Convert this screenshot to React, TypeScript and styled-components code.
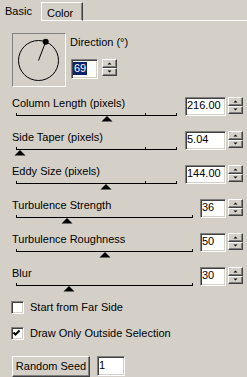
import styled, { createGlobalStyle, css } from 'styled-components';

const GlobalStyle = createGlobalStyle`
  html, body {
    margin: 0;
    padding: 0;
    background: #d4d0c8;
  }
`;

const Window = styled.div`
  width: 247px;
  height: 377px;
  overflow: hidden;
  background: #d4d0c8;
  font-family: "Liberation Sans", Arial, sans-serif;
  font-size: 11px;
  line-height: 13px;
  color: #000;
  display: flex;
  flex-direction: column;
`;

const TabStrip = styled.div`
  display: flex;
  align-items: flex-end;
  height: 21px;
  flex: none;
`;

const Tab = styled.div<{ $active?: boolean }>`
  box-sizing: border-box;
  white-space: nowrap;
  ${({ $active }) =>
    $active
      ? css`
          width: 41px;
          height: 21px;
          padding: 5px 0 0 5px;
        `
      : css`
          height: 19px;
          padding: 4px 9px 0 5px;
          border-top: 1px solid #fff;
          border-left: 1px solid #fff;
          border-right: 1px solid #404040;
          border-bottom: 1px solid #fff;
          box-shadow: inset -1px 0 #808080;
        `}
`;

const TabLine = styled.div`
  flex: 1;
  height: 1px;
  background: #fff;
`;

const Body = styled.div`
  display: flex;
  flex-direction: column;
  padding: 12px 4px 0 12px;
`;

const TopSection = styled.div`
  display: flex;
  height: 54px;
  flex: none;
  margin-bottom: 10px;
`;

const Dial = styled.div`
  box-sizing: border-box;
  width: 54px;
  height: 54px;
  border: 1px solid;
  border-color: #808080 #fff #fff #808080;
`;

const DirectionCol = styled.div`
  display: flex;
  flex-direction: column;
  margin-left: 4px;
  padding-top: 3px;
`;

const SpinRow = styled.div<{ $top?: number; $left?: number }>`
  display: flex;
  align-items: flex-start;
  gap: ${({ $left }) => ($left ? 4 : 2)}px;
  margin-top: ${({ $top }) => $top ?? 0}px;
  margin-left: ${({ $left }) => $left ?? 0}px;
`;

const Field = styled.div<{ $w: number; $h?: number; $pt?: number }>`
  box-sizing: border-box;
  width: ${({ $w }) => $w}px;
  height: ${({ $h }) => $h ?? 19}px;
  flex: none;
  background: #fff;
  border: 1px solid;
  border-color: #808080 #fff #fff #808080;
  box-shadow: inset 1px 1px #404040, inset -1px -1px #d4d0c8;
  padding: ${({ $pt }) => $pt ?? 1}px 0 0 1px;
  white-space: nowrap;
  overflow: hidden;
`;

const Selected = styled.span`
  display: inline-block;
  background: #0a246a;
  color: #fff;
  padding: 0 1px;
`;

const Spin = styled.div`
  display: flex;
  flex-direction: column;
  width: 15px;
  height: 17px;
  flex: none;
`;

const SpinHalf = styled.div`
  flex: 1;
  box-sizing: border-box;
  border: 1px solid;
  border-color: #fff #404040 #404040 #fff;
  box-shadow: inset -1px -1px #808080;
  background: #d4d0c8;
  display: flex;
  align-items: center;
  justify-content: center;
`;

const SliderRow = styled.div`
  display: flex;
  height: 34px;
  flex: none;
`;

const SliderCol = styled.div`
  flex: 1;
  display: flex;
  flex-direction: column;
`;

const Label = styled.div`
  height: 13px;
  white-space: nowrap;
`;

const TrackSvg = styled.svg`
  display: block;
  margin: 3px 0 0 4px;
  overflow: visible;
`;

const CheckRow = styled.div<{ $top: number }>`
  display: flex;
  align-items: center;
  gap: 6px;
  height: 13px;
  margin: ${({ $top }) => $top}px 0 0 -1px;
  white-space: nowrap;
`;

const CheckBox = styled.div`
  box-sizing: border-box;
  width: 13px;
  height: 13px;
  flex: none;
  background: #fff;
  border: 1px solid;
  border-color: #808080 #fff #fff #808080;
  box-shadow: inset 1px 1px #404040, inset -1px -1px #d4d0c8;
`;

const ButtonRow = styled.div`
  display: flex;
  align-items: flex-start;
  gap: 7px;
  margin-top: 16px;
`;

const Button = styled.button`
  box-sizing: border-box;
  width: 78px;
  height: 21px;
  padding: 0;
  font: inherit;
  color: #000;
  background: #d4d0c8;
  border: 1px solid;
  border-color: #fff #404040 #404040 #fff;
  box-shadow: inset -1px -1px #808080;
`;

const Spinner = () => (
  <Spin>
    <SpinHalf>
      <svg width="5" height="3">
        <path d="M2.5 0.5 L4.5 2.5 L0.5 2.5 Z" fill="#000" />
      </svg>
    </SpinHalf>
    <SpinHalf>
      <svg width="5" height="3">
        <path d="M0.5 0.5 L4.5 0.5 L2.5 2.5 Z" fill="#000" />
      </svg>
    </SpinHalf>
  </Spin>
);

type Slider = {
  label: string;
  value: string;
  thumb: number;
  track: number;
  field: number;
  ticks: number[];
};

const sliders: Slider[] = [
  { label: 'Column Length (pixels)', value: '216.00', thumb: 91, track: 161, field: 41, ticks: [0, 129, 160] },
  { label: 'Side Taper (pixels)', value: '5.04', thumb: 4, track: 161, field: 41, ticks: [0, 129, 160] },
  { label: 'Eddy Size (pixels)', value: '144.00', thumb: 90, track: 161, field: 41, ticks: [0, 129, 160] },
  { label: 'Turbulence Strength', value: '36', thumb: 51, track: 177, field: 26, ticks: [0, 176] },
  { label: 'Turbulence Roughness', value: '50', thumb: 89, track: 177, field: 26, ticks: [0, 176] },
  { label: 'Blur', value: '30', thumb: 53, track: 177, field: 26, ticks: [0, 176] },
];

const Track = ({ s }: { s: Slider }) => (
  <TrackSvg width={s.track} height={10}>
    <line x1={0} y1={2.5} x2={s.track} y2={2.5} stroke="#000" />
    {s.ticks.map((t) => (
      <line key={t} x1={t + 0.5} y1={0} x2={t + 0.5} y2={3} stroke="#000" />
    ))}
    <polygon points={`${s.thumb - 5.5},8.5 ${s.thumb},3 ${s.thumb + 5.5},8.5`} fill="#000" />
  </TrackSvg>
);

// direction dial, 69 degrees from the x axis
const angle = (69 * Math.PI) / 180;
const cx = 25.5;
const cy = 26.5;
const dotX = cx + 20 * Math.cos(angle);
const dotY = cy - 20 * Math.sin(angle);

export default function App() {
  return (
    <Window>
      <GlobalStyle />
      <TabStrip>
        <Tab $active>Basic</Tab>
        <Tab>Color</Tab>
        <TabLine />
      </TabStrip>
      <Body>
        <TopSection>
          <Dial>
            <svg width="52" height="52">
              <circle cx={cx} cy={cy} r={20} fill="none" stroke="#000" />
              <line x1={cx} y1={cy} x2={dotX} y2={dotY} stroke="#000" />
              <circle cx={dotX} cy={dotY} r={3} fill="#000" />
            </svg>
          </Dial>
          <DirectionCol>
            <Label>Direction (°)</Label>
            <SpinRow $top={10} $left={1}>
              <Field $w={27} $h={20} $pt={2}>
                <Selected>69</Selected>
              </Field>
              <Spinner />
            </SpinRow>
          </DirectionCol>
        </TopSection>

        {sliders.map((s) => (
          <SliderRow key={s.label}>
            <SliderCol>
              <Label>{s.label}</Label>
              <Track s={s} />
            </SliderCol>
            <SpinRow>
              <Field $w={s.field}>{s.value}</Field>
              <Spinner />
            </SpinRow>
          </SliderRow>
        ))}

        <CheckRow $top={0}>
          <CheckBox />
          <span>Start from Far Side</span>
        </CheckRow>
        <CheckRow $top={13}>
          <CheckBox>
            <svg width="9" height="9">
              <path d="M1.5 3.5 L3.5 5.5 L7.5 1.5" fill="none" stroke="#000" strokeWidth="2" />
            </svg>
          </CheckBox>
          <span>Draw Only Outside Selection</span>
        </CheckRow>

        <ButtonRow>
          <Button>Random Seed</Button>
          <Field $w={28} $h={20} $pt={2}>1</Field>
        </ButtonRow>
      </Body>
    </Window>
  );
}
